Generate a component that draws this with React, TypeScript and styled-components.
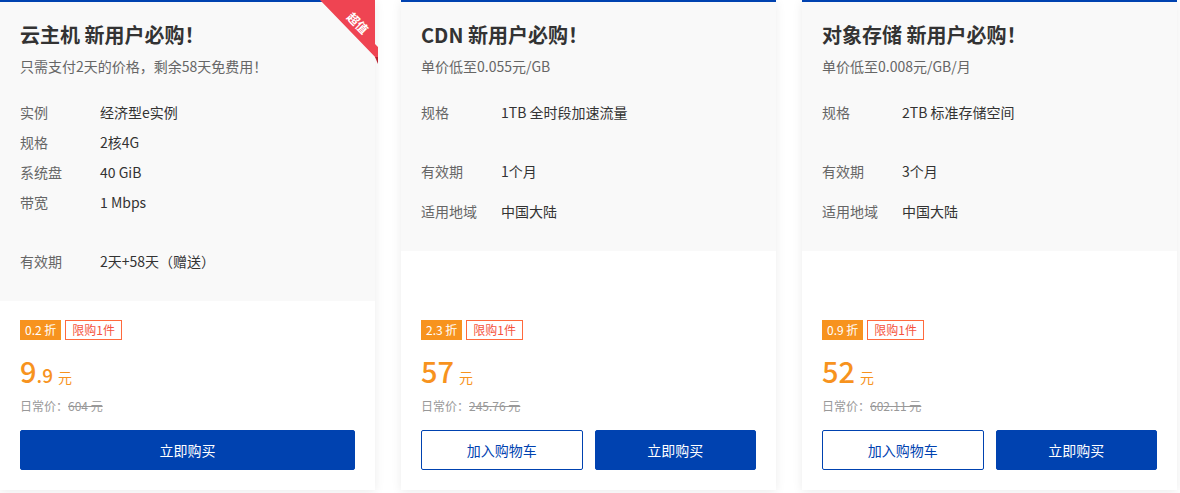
import { createGlobalStyle, styled } from 'styled-components';

const GlobalStyle = createGlobalStyle`
  html, body {
    margin: 0;
    padding: 0;
    background: #fff;
  }
  body {
    font-family: "Noto Sans CJK SC", "Noto Sans", sans-serif;
    color: #333;
  }
`;

const Board = styled.div`
  display: flex;
  gap: 26px;
  width: 1180px;
  height: 493px;
  overflow: hidden;
  box-sizing: border-box;
`;

const Card = styled.div`
  position: relative;
  flex: 0 0 375px;
  height: 490px;
  box-sizing: border-box;
  display: flex;
  flex-direction: column;
  border-top: 2px solid #0042b0;
  background: #fff;
  box-shadow: 0 2px 10px rgba(0, 0, 0, 0.08);
`;

const Head = styled.div`
  background: #f9f9f9;
  padding: 20px 20px 30px;
`;

const Title = styled.h3`
  margin: 0;
  font-size: 20px;
  line-height: 26px;
  font-weight: 700;
  color: #333;
`;

const Subtitle = styled.p`
  margin: 8px 0 0;
  font-size: 14px;
  line-height: 20px;
  color: #666;
`;

const SpecList = styled.div<{ $gap: number; $top: number }>`
  display: flex;
  flex-direction: column;
  gap: ${p => p.$gap}px;
  margin-top: ${p => p.$top}px;
`;

const SpecRow = styled.div`
  display: flex;
  font-size: 14px;
  line-height: 20px;
`;

const SpecLabel = styled.span`
  flex: 0 0 80px;
  color: #666;
`;

const SpecValue = styled.span`
  color: #333;
`;

const Foot = styled.div`
  margin-top: auto;
  padding: 17px 20px 20px;
`;

const Tags = styled.div`
  display: flex;
  gap: 4px;
`;

const Discount = styled.span`
  height: 20px;
  line-height: 20px;
  padding: 0 5px;
  font-size: 12px;
  color: #fff;
  background: #f7931e;
`;

const Limit = styled.span`
  height: 20px;
  line-height: 18px;
  box-sizing: border-box;
  padding: 0 6px;
  font-size: 12px;
  color: #f5533d;
  border: 1px solid #ff6a3d;
`;

const Price = styled.div`
  margin-top: 12px;
  height: 36px;
  display: flex;
  align-items: baseline;
  color: #f7931e;
  line-height: 36px;
`;

const PriceInt = styled.span`
  font-size: 29px;
  font-weight: 500;
`;

const PriceDec = styled.span`
  font-size: 19px;
  font-weight: 500;
`;

const Unit = styled.span`
  margin-left: 5px;
  font-size: 14px;
`;

const Original = styled.div`
  margin-top: 9px;
  font-size: 12px;
  line-height: 18px;
  color: #999;

  s {
    color: #999;
  }
`;

const Actions = styled.div<{ $cols: number }>`
  margin-top: 15px;
  display: grid;
  grid-template-columns: repeat(${p => p.$cols}, 1fr);
  gap: 12px;
`;

const Button = styled.button<{ $outline?: boolean }>`
  height: 40px;
  border-radius: 2px;
  font-family: inherit;
  font-size: 14px;
  cursor: pointer;
  border: 1px solid #0042b0;
  background: ${p => (p.$outline ? '#fff' : '#0042b0')};
  color: ${p => (p.$outline ? '#0042b0' : '#fff')};
`;

const Ribbon = styled.div`
  position: absolute;
  top: -2px;
  right: -3px;
  width: 58px;
  height: 64px;
  pointer-events: none;
`;

const RibbonBand = styled.div`
  position: absolute;
  inset: 0;
  background: #ef4452;
  clip-path: polygon(0 0, 55px 0, 55px 44px, 58px 47px, 58px 60px);
`;

const RibbonFold = styled.div`
  position: absolute;
  right: 0;
  top: 57px;
  width: 3px;
  height: 7px;
  background: #b8202e;
  clip-path: polygon(0 0, 100% 0, 100% 100%);
`;

const RibbonText = styled.span`
  position: absolute;
  left: 26px;
  top: 16px;
  font-size: 12px;
  line-height: 14px;
  font-weight: 700;
  color: #fff;
  transform: rotate(45deg);
`;

type Offer = {
  title: string;
  subtitle: string;
  specs: [string, string][];
  terms: [string, string][];
  discount: string;
  priceInt: string;
  priceDec?: string;
  original: string;
  cart: boolean;
  ribbon?: boolean;
};

const offers: Offer[] = [
  {
    title: '云主机 新用户必购！',
    subtitle: '只需支付2天的价格，剩余58天免费用！',
    specs: [
      ['实例', '经济型e实例'],
      ['规格', '2核4G'],
      ['系统盘', '40 GiB'],
      ['带宽', '1 Mbps'],
    ],
    terms: [['有效期', '2天+58天（赠送）']],
    discount: '0.2 折',
    priceInt: '9',
    priceDec: '.9',
    original: '604 元',
    cart: false,
    ribbon: true,
  },
  {
    title: 'CDN 新用户必购！',
    subtitle: '单价低至0.055元/GB',
    specs: [['规格', '1TB 全时段加速流量']],
    terms: [
      ['有效期', '1个月'],
      ['适用地域', '中国大陆'],
    ],
    discount: '2.3 折',
    priceInt: '57',
    original: '245.76 元',
    cart: true,
  },
  {
    title: '对象存储 新用户必购！',
    subtitle: '单价低至0.008元/GB/月',
    specs: [['规格', '2TB 标准存储空间']],
    terms: [
      ['有效期', '3个月'],
      ['适用地域', '中国大陆'],
    ],
    discount: '0.9 折',
    priceInt: '52',
    original: '602.11 元',
    cart: true,
  },
];

function OfferCard({ offer }: { offer: Offer }) {
  return (
    <Card>
      {offer.ribbon && (
        <Ribbon>
          <RibbonBand />
          <RibbonFold />
          <RibbonText>超值</RibbonText>
        </Ribbon>
      )}
      <Head>
        <Title>{offer.title}</Title>
        <Subtitle>{offer.subtitle}</Subtitle>
        <SpecList $gap={10} $top={26}>
          {offer.specs.map(([label, value]) => (
            <SpecRow key={label}>
              <SpecLabel>{label}</SpecLabel>
              <SpecValue>{value}</SpecValue>
            </SpecRow>
          ))}
        </SpecList>
        <SpecList $gap={20} $top={39}>
          {offer.terms.map(([label, value]) => (
            <SpecRow key={label}>
              <SpecLabel>{label}</SpecLabel>
              <SpecValue>{value}</SpecValue>
            </SpecRow>
          ))}
        </SpecList>
      </Head>
      <Foot>
        <Tags>
          <Discount>{offer.discount}</Discount>
          <Limit>限购1件</Limit>
        </Tags>
        <Price>
          <PriceInt>{offer.priceInt}</PriceInt>
          {offer.priceDec && <PriceDec>{offer.priceDec}</PriceDec>}
          <Unit>元</Unit>
        </Price>
        <Original>
          日常价：<s>{offer.original}</s>
        </Original>
        <Actions $cols={offer.cart ? 2 : 1}>
          {offer.cart && <Button $outline>加入购物车</Button>}
          <Button>立即购买</Button>
        </Actions>
      </Foot>
    </Card>
  );
}

export default function App() {
  return (
    <>
      <GlobalStyle />
      <Board>
        {offers.map(offer => (
          <OfferCard key={offer.title} offer={offer} />
        ))}
      </Board>
    </>
  );
}
